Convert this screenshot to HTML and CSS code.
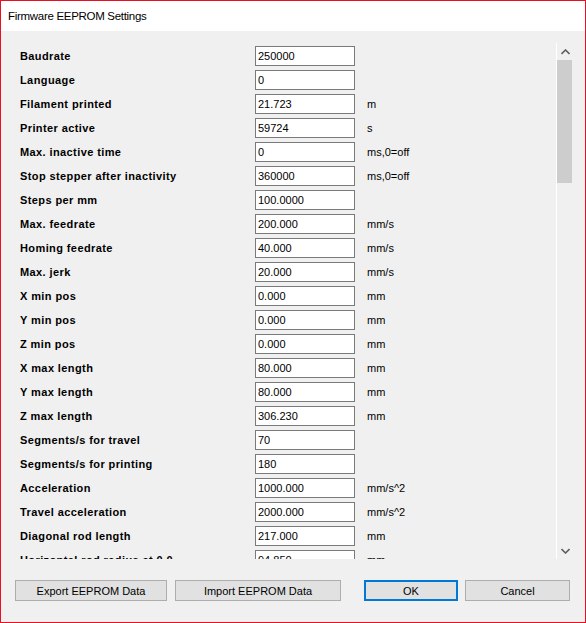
FILE: index.html
```html
<!DOCTYPE html>
<html>
<head>
<meta charset="utf-8">
<link rel="stylesheet" href="styles.css">
</head>
<body>
<div class="window">
  <div class="titlebar">Firmware EEPROM Settings</div>
  <div class="client">
    <div class="panel">
      <div class="rows">
        <div class="row"><span class="label">Baudrate</span><span class="field">250000</span><span class="unit"></span></div>
        <div class="row"><span class="label">Language</span><span class="field">0</span><span class="unit"></span></div>
        <div class="row"><span class="label">Filament printed</span><span class="field">21.723</span><span class="unit">m</span></div>
        <div class="row"><span class="label">Printer active</span><span class="field">59724</span><span class="unit">s</span></div>
        <div class="row"><span class="label">Max. inactive time</span><span class="field">0</span><span class="unit">ms,0=off</span></div>
        <div class="row"><span class="label">Stop stepper after inactivity</span><span class="field">360000</span><span class="unit">ms,0=off</span></div>
        <div class="row"><span class="label">Steps per mm</span><span class="field">100.0000</span><span class="unit"></span></div>
        <div class="row"><span class="label">Max. feedrate</span><span class="field">200.000</span><span class="unit">mm/s</span></div>
        <div class="row"><span class="label">Homing feedrate</span><span class="field">40.000</span><span class="unit">mm/s</span></div>
        <div class="row"><span class="label">Max. jerk</span><span class="field">20.000</span><span class="unit">mm/s</span></div>
        <div class="row"><span class="label">X min pos</span><span class="field">0.000</span><span class="unit">mm</span></div>
        <div class="row"><span class="label">Y min pos</span><span class="field">0.000</span><span class="unit">mm</span></div>
        <div class="row"><span class="label">Z min pos</span><span class="field">0.000</span><span class="unit">mm</span></div>
        <div class="row"><span class="label">X max length</span><span class="field">80.000</span><span class="unit">mm</span></div>
        <div class="row"><span class="label">Y max length</span><span class="field">80.000</span><span class="unit">mm</span></div>
        <div class="row"><span class="label">Z max length</span><span class="field">306.230</span><span class="unit">mm</span></div>
        <div class="row"><span class="label">Segments/s for travel</span><span class="field">70</span><span class="unit"></span></div>
        <div class="row"><span class="label">Segments/s for printing</span><span class="field">180</span><span class="unit"></span></div>
        <div class="row"><span class="label">Acceleration</span><span class="field">1000.000</span><span class="unit">mm/s^2</span></div>
        <div class="row"><span class="label">Travel acceleration</span><span class="field">2000.000</span><span class="unit">mm/s^2</span></div>
        <div class="row"><span class="label">Diagonal rod length</span><span class="field">217.000</span><span class="unit">mm</span></div>
        <div class="row"><span class="label">Horizontal rod radius at 0,0</span><span class="field">94.850</span><span class="unit">mm</span></div>
        <div class="row"><span class="label">Max. printable radius</span><span class="field">75.000</span><span class="unit">mm</span></div>
      </div>
      <div class="scrollbar">
        <div class="arrow">
          <svg width="9" height="6" viewBox="0 0 9 6"><path d="M0.5 5 L4.5 1 L8.5 5" fill="none" stroke="#606060" stroke-width="1.6"/></svg>
        </div>
        <div class="track"><div class="thumb"></div></div>
        <div class="arrow">
          <svg width="9" height="6" viewBox="0 0 9 6"><path d="M0.5 1 L4.5 5 L8.5 1" fill="none" stroke="#606060" stroke-width="1.6"/></svg>
        </div>
      </div>
    </div>
    <div class="buttons">
      <button class="btn btn-export">Export EEPROM Data</button>
      <button class="btn btn-import">Import EEPROM Data</button>
      <button class="btn btn-ok">OK</button>
      <button class="btn btn-cancel">Cancel</button>
    </div>
  </div>
</div>
</body>
</html>
```
FILE: styles.css
```css
html, body {
  margin: 0;
  padding: 0;
}
body {
  width: 586px;
  height: 623px;
  overflow: hidden;
  font-family: "Liberation Sans", Arial, sans-serif;
}
.window {
  width: 586px;
  height: 623px;
  box-sizing: border-box;
  border: 1px solid #e81123;
  display: flex;
  flex-direction: column;
  background: #f0f0f0;
}
.titlebar {
  height: 30px;
  flex: none;
  background: #ffffff;
  color: #000;
  font-family: "Liberation Sans", Arial, sans-serif;
  font-size: 11.5px;
  letter-spacing: -0.3px;
  line-height: 30px;
  padding-left: 7px;
}
.client {
  flex: 1;
  display: flex;
  flex-direction: column;
  padding-top: 12px;
}
.panel {
  display: flex;
  height: 516px;
  width: 572px;
}
.rows {
  flex: 1;
  overflow: hidden;
  padding: 3px 0 0 19px;
}
.row {
  display: flex;
  align-items: center;
  height: 20px;
  margin-bottom: 4px;
  font-size: 11px;
  color: #000;
}
.label {
  width: 235px;
  font-weight: bold;
  letter-spacing: 0.4px;
  white-space: nowrap;
}
.field {
  box-sizing: border-box;
  width: 100px;
  height: 20px;
  border: 1px solid #7a7a7a;
  background: #fff;
  padding-left: 2px;
  line-height: 18px;
}
.unit {
  padding-left: 12px;
  white-space: nowrap;
}
.scrollbar {
  width: 16px;
  flex: none;
  border-left: 1px solid #ffffff;
  background: #f0f0f0;
  display: flex;
  flex-direction: column;
}
.arrow {
  height: 17px;
  display: flex;
  align-items: center;
  justify-content: center;
  flex: none;
}
.track {
  flex: 1;
  display: flex;
  flex-direction: column;
}
.thumb {
  height: 123px;
  margin: 0 1px 0 0;
  background: #cdcdcd;
}
.buttons {
  display: flex;
  padding: 21px 0 0 14px;
}
.btn {
  box-sizing: border-box;
  height: 21px;
  margin: 0;
  padding: 0;
  background: #e1e1e1;
  border: 1px solid #adadad;
  font-family: "Liberation Sans", Arial, sans-serif;
  font-size: 11px;
  color: #000;
}
.btn-export { width: 152px; }
.btn-import { width: 166px; margin-left: 8px; }
.btn-ok { width: 94px; margin-left: 23px; border: 2px solid #0078d7; }
.btn-cancel { width: 105px; margin-left: 7px; }
```
